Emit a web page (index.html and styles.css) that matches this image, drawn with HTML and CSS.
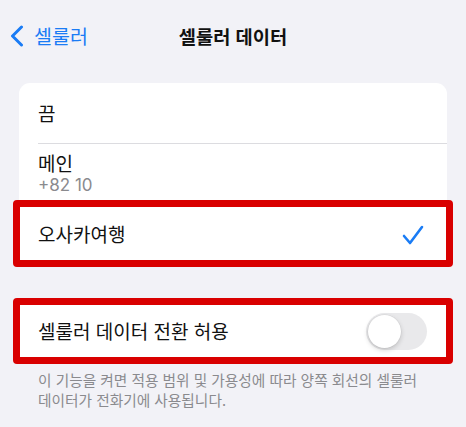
FILE: index.html
```html
<!DOCTYPE html>
<html lang="ko">
<head>
<meta charset="utf-8">
<link rel="stylesheet" href="styles.css">
</head>
<body>
<div class="nav">
  <div class="back">
    <svg class="chev" width="16" height="22" viewBox="0 0 16 22"><path d="M12.5 2 L3.5 11 L12.5 20" fill="none" stroke="#1a7cf5" stroke-width="3" stroke-linecap="round" stroke-linejoin="round"/></svg>
    <span>셀룰러</span>
  </div>
  <div class="title">셀룰러 데이터</div>
</div>

<div class="card">
  <div class="row r1"><span class="label">끔</span></div>
  <div class="sep"></div>
  <div class="row r2">
    <span class="label">메인</span>
    <span class="sub">+82 10</span>
  </div>
  <div class="row r3 hl">
    <span class="label">오사카여행</span>
    <svg class="check" width="22" height="20" viewBox="0 0 22 20"><path d="M2 11 L8 18 L20 2" fill="none" stroke="#1a7cf5" stroke-width="2.6" stroke-linecap="round" stroke-linejoin="round"/></svg>
  </div>
</div>

<div class="card card2">
  <div class="row r4 hl">
    <span class="label">셀룰러 데이터 전환 허용</span>
    <div class="toggle"><div class="knob"></div></div>
  </div>
</div>
<p class="foot">이 기능을 켜면 적용 범위 및 가용성에 따라 양쪽 회선의 셀룰러 데이터가 전화기에 사용됩니다.</p>
</body>
</html>
```

FILE: styles.css
```css
html, body {
  margin: 0;
  padding: 0;
  background: #f2f2f7;
  font-family: "Noto Sans CJK KR", "Noto Sans", sans-serif;
  color: #111;
}
.nav {
  height: 72px;
  position: relative;
  display: flex;
  align-items: center;
  justify-content: center;
}
.back {
  position: absolute;
  left: 9px;
  top: 25px;
  display: flex;
  align-items: center;
  gap: 9px;
  color: #1a7cf5;
  font-size: 19.5px;
  line-height: 22px;
}
.title {
  font-size: 18.7px;
  font-weight: 700;
  line-height: 22px;
}
.card {
  margin: 11px 19px 0 19px;
  background: #fff;
  border-radius: 11px;
}
.row {
  position: relative;
  display: flex;
  align-items: center;
  padding: 0 0 0 19px;
}
.label {
  font-size: 19px;
  line-height: 22px;
}
.r1 { height: 60px; }
.sep {
  height: 1px;
  margin-left: 19px;
  background: #dcdce0;
}
.r2 {
  height: 56px;
  flex-direction: column;
  align-items: flex-start;
  justify-content: flex-start;
  padding-top: 8px;
  box-sizing: border-box;
}
.sub {
  font-family: "Inter", "Noto Sans", sans-serif;
  font-size: 17px;
  line-height: 22px;
  color: #8a8a8e;
}
.r3 {
  height: 67px;
  justify-content: space-between;
  padding-right: 23px;
  border-radius: 0 0 11px 11px;
}
.check { margin-top: 2px; }
.hl::after {
  content: "";
  position: absolute;
  top: 0;
  bottom: 0;
  left: -6px;
  right: -6px;
  border: 7px solid #d90000;
  border-radius: 4px;
}
.card2 { margin-top: 31px; }
.r4 {
  height: 66px;
  justify-content: space-between;
  padding-right: 20px;
}
.toggle {
  width: 61px;
  height: 37px;
  border-radius: 19px;
  background: #e9e9eb;
  position: relative;
}
.knob {
  position: absolute;
  left: 2px;
  top: 2px;
  width: 33px;
  height: 33px;
  border-radius: 50%;
  background: #fff;
  box-shadow: 0 2px 5px rgba(0,0,0,0.18), 0 0 0 0.5px rgba(0,0,0,0.06);
}
.foot {
  margin: 6px 38px 0 38px;
  font-size: 14.7px;
  line-height: 20px;
  color: #8a8a8e;
}
```
